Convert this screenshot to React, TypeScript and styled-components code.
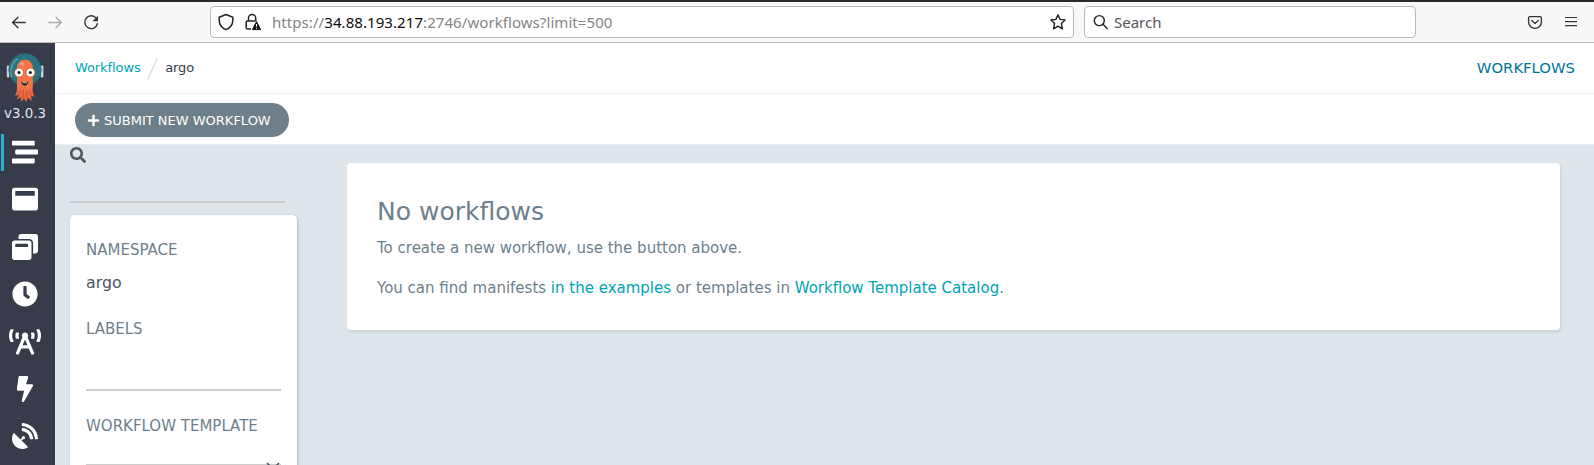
import React from "react";
import styled, { createGlobalStyle } from "styled-components";
import {
  FaStream,
  FaWindowMaximize,
  FaWindowRestore,
  FaClock,
  FaBroadcastTower,
  FaBolt,
  FaSatelliteDish,
  FaSearch,
  FaPlus,
} from "react-icons/fa";

const GlobalStyle = createGlobalStyle`
  * { box-sizing: border-box; }
  html, body { margin: 0; height: 100%; overflow: hidden; }
  body { font-family: "DejaVu Sans", sans-serif; font-size: 15px; background: #dee6eb; }
`;

const Window = styled.div`
  display: flex;
  flex-direction: column;
  height: 465px;
  overflow: hidden;
`;

const BrowserBar = styled.div`
  display: flex;
  flex: none;
  align-items: center;
  height: 43px;
  border-top: 2px solid #2b2828;
  border-bottom: 1px solid #bcbcbc;
  background: #f8f8f8;
  font-family: "Noto Sans", sans-serif;
  font-size: 15px;
`;

const NavButtons = styled.div`
  display: flex;
  gap: 16px;
  width: 210px;
  padding-left: 9px;
  svg { display: block; }
`;

const Field = styled.div<{ $width: number }>`
  display: flex;
  align-items: center;
  width: ${(p) => p.$width}px;
  height: 32px;
  border: 1px solid #bbbbbb;
  border-radius: 4px;
  background: #fff;
  svg { display: block; flex: none; }
`;

const AddressField = styled(Field)`
  padding: 0 5px 0 6px;
  margin-right: 10px;
`;

const SearchField = styled(Field)`
  padding-left: 7px;
  gap: 4px;
  font-size: 15px;
  color: #55555a;
`;

const SiteInfo = styled.div`
  display: flex;
  gap: 9px;
`;

const Address = styled.div`
  flex: 1;
  margin-left: 10px;
  color: #858585;
  letter-spacing: 0.07px;
  white-space: nowrap;
`;

const Host = styled.span`
  color: #0c0c0d;
`;

const BrowserTools = styled.div`
  display: flex;
  margin-left: auto;
  padding-right: 13px;
  gap: 16px;
  svg { display: block; }
`;

const Body = styled.div`
  display: flex;
  flex: 1;
  min-height: 0;
`;

const Sidebar = styled.nav`
  display: flex;
  flex-direction: column;
  flex: none;
  width: 55px;
  padding-top: 9px;
  background: #373b4a;
  color: #fff;
`;

const Brand = styled.div`
  padding-left: 6px;
  height: 50px;
  flex: none;
  svg { display: block; }
`;

const Version = styled.div`
  width: 55px;
  height: 18px;
  flex: none;
  margin: 3px 0 11px;
  padding-left: 4px;
  color: #dfe4ea;
  font-size: 13.4px;
  line-height: 18px;
`;

const NavItem = styled.div<{ $active?: boolean; $size?: number }>`
  display: flex;
  flex: none;
  align-items: center;
  justify-content: center;
  height: 37px;
  margin: 0 5px 10.4px 1px;
  border-left: 3px solid ${(p) => (p.$active ? "#1fb5cc" : "transparent")};
  padding: 0 5px ${(p) => (p.$active ? 2 : 1)}px 0;
  font-size: ${(p) => p.$size ?? 26}px;
  svg { display: block; flex: none; }
`;

const Content = styled.main`
  display: flex;
  flex-direction: column;
  flex: 1;
  min-width: 0;
`;

const PageHeader = styled.header`
  display: flex;
  flex: none;
  align-items: center;
  justify-content: space-between;
  height: 51px;
  padding: 0 19px 0 20px;
  border-bottom: 1px solid #eff1f3;
  background: #fff;
`;

const Breadcrumbs = styled.div`
  display: flex;
  align-items: center;
  padding-bottom: 1px;
  color: #363c4a;
  font-size: 13px;
  letter-spacing: -0.09px;
  svg { display: block; margin: 2px 7px 0 6.5px; }
`;

const Link = styled.span`
  color: #00a4b6;
`;

const PageTitle = styled.div`
  padding-bottom: 2px;
  color: #007592;
  font-size: 14.8px;
`;

const Toolbar = styled.div`
  display: flex;
  flex: none;
  align-items: center;
  height: 51px;
  padding: 2px 0 0 20px;
  border-bottom: 1px solid #e9eef1;
  background: #fff;
`;

const SubmitButton = styled.button`
  display: flex;
  align-items: center;
  gap: 4px;
  width: 214px;
  height: 34px;
  padding: 0 0 0 12px;
  border: 0;
  border-radius: 17px;
  background: #6d7f8b;
  color: #fff;
  font-family: inherit;
  font-size: 13px;
  white-space: nowrap;
`;

const Columns = styled.div`
  display: flex;
  flex: 1;
  min-height: 0;
  background: #dee6eb;
`;

const Filters = styled.aside`
  display: flex;
  flex-direction: column;
  width: 227px;
  margin-left: 15px;
  color: #6d7f8b;
`;

const SearchInput = styled.div`
  width: 215px;
  height: 58px;
  flex: none;
  padding-top: 2px;
  margin-bottom: 12px;
  border-bottom: 2px solid #cccccc;
  color: #495763;
  font-size: 16px;
  svg { display: block; }
`;

const FilterCard = styled.div`
  flex: none;
  height: 300px;
  padding: 25px 16px;
  border-radius: 5px;
  background: #fff;
  box-shadow: 1px 1px 3px #a9bbc4;
`;

const Label = styled.div`
  height: 20px;
  line-height: 20px;
  white-space: nowrap;
`;

const Value = styled.div`
  height: 20px;
  margin: 13px 0 26px;
  color: #495763;
  font-size: 15.8px;
  line-height: 20px;
`;

const InputLine = styled.div<{ $height: number }>`
  display: flex;
  justify-content: flex-end;
  align-items: flex-end;
  height: ${(p) => p.$height}px;
  margin-bottom: 25px;
  border-bottom: 2px solid #cccccc;
  svg { display: block; flex: none; margin: 0 1px -7px 0; }
`;

const EmptyState = styled.section`
  width: 1213px;
  height: 167px;
  margin: 18px 0 0 50px;
  padding: 31px 30px;
  border-radius: 4px;
  background: #fff;
  box-shadow: 1px 2px 3px #c5d0d5;
  color: #6d7f8b;
`;

const Heading = styled.h4`
  margin: 0 0 6px;
  font-size: 25px;
  font-weight: 400;
  line-height: 36px;
`;

const Paragraph = styled.p`
  margin: 0 0 16px;
  line-height: 24px;
`;

const ArrowIcon = ({ color, flip }: { color: string; flip?: boolean }) => (
  <svg width="20" height="20" viewBox="0 0 20 20" fill="none" stroke={color} strokeWidth="1.4" strokeLinecap="round" strokeLinejoin="round">
    <path d={flip ? "M3.8 10.5H16.3M11 5.3l5.4 5.2-5.4 5.2" : "M16.2 10.5H3.7M9 5.3L3.6 10.5 9 15.7"} />
  </svg>
);

const ReloadIcon = () => (
  <svg width="20" height="20" viewBox="0 0 20 20" fill="none">
    <path d="M15.3 6.3A6.4 6.4 0 1 0 16.4 11.8" stroke="#343438" strokeWidth="1.4" strokeLinecap="round" />
    <path d="M17 3.8V9.3H11.4z" fill="#343438" />
  </svg>
);

const ShieldIcon = () => (
  <svg width="18" height="20" viewBox="0 0 18 20" fill="none" stroke="#222226" strokeWidth="1.5" strokeLinejoin="round">
    <path d="M9 2.5L15.8 5.2V8.1C15.8 12.6 13 16.2 9 17.6 5 16.2 2.2 12.6 2.2 8.1V5.2z" />
  </svg>
);

const LockWarningIcon = () => (
  <svg width="18" height="20" viewBox="0 0 18 20" fill="none">
    <path d="M4.5 9V6a3.6 3.6 0 0 1 7.2 0v3M7 17.1H3.6a1.4 1.4 0 0 1-1.4-1.4V10.4A1.4 1.4 0 0 1 3.6 9H11.6" stroke="#222226" strokeWidth="1.5" />
    <path d="M12.5 9.6L16.6 17.6H8.4z" fill="#16161a" stroke="#16161a" strokeLinejoin="round" />
    <path d="M12.5 12v2.7M12.5 15.8v1.1" stroke="#fff" strokeWidth="1" />
  </svg>
);

const StarIcon = () => (
  <svg width="20" height="20" viewBox="0 0 20 20" fill="none" stroke="#222226" strokeWidth="1.4" strokeLinejoin="round">
    <path d="M10 2.8l2.1 4.6 5 .6-3.7 3.4 1 5.4-4.4-2.6-4.4 2.6 1-5.4L2.9 8l5-.6z" />
  </svg>
);

const MagnifierIcon = () => (
  <svg width="18" height="20" viewBox="0 0 18 20" fill="none" stroke="#222226" strokeWidth="1.4" strokeLinecap="round">
    <circle cx="7.3" cy="8.6" r="5" />
    <path d="M11 12.3l4.2 4.3" />
  </svg>
);

const PocketIcon = () => (
  <svg width="20" height="20" viewBox="0 0 20 20" fill="none" stroke="#343438" strokeWidth="1.4" strokeLinecap="round" strokeLinejoin="round">
    <path d="M5 4.6h10a1.4 1.4 0 0 1 1.4 1.4v4a6.4 6.4 0 0 1-12.8 0V6A1.4 1.4 0 0 1 5 4.6z" />
    <path d="M6.8 8.5l3.2 2.9 3.2-2.9" />
  </svg>
);

const MenuIcon = () => (
  <svg width="20" height="20" viewBox="0 0 20 20" stroke="#343438" strokeWidth="1.2">
    <path d="M4 5.5h12M4 9.6h12M4 13.7h12" />
  </svg>
);

const Logo = () => (
  <svg width="38" height="50" viewBox="0 0 38 50">
    <rect x=".8" y="13.5" width="2.6" height="12" rx="1" fill="#bdd5e3" />
    <rect x="34.8" y="13.5" width="2.6" height="12" rx="1" fill="#bdd5e3" />
    <circle cx="19" cy="17.8" r="16.2" fill="#2a7480" stroke="#33626f" strokeWidth=".8" />
    <path d="M5.6 25C3.8 18 6 10 11.5 7" fill="none" stroke="#71a5ab" strokeWidth="1.1" />
    <path d="M11 31C11.4 38 10.5 41 9 44.2L12.6 42.6L11 47.6L15 45.2L14.8 50L18 46.5L20.2 50L21.8 45.4L25.8 49L25 43.6L28.6 45C27 41 26.2 38 26.6 31z" fill="#ea673f" />
    <path d="M11 32V15.5a7.9 7.9 0 0 1 15.8 0V32q-.2 6-1.8 7H13q-1.8-1-2-7z" fill="#f47449" />
    <path d="M14.2 37q-.2 5-1.6 7.5M17.3 37.5v8.5M20.6 37.5v8.5M23.6 37q.1 5 1.5 7" fill="none" stroke="#c94f30" strokeWidth=".7" />
    <ellipse cx="16" cy="11.8" rx="2.7" ry="1.9" fill="#fa9875" />
    <circle cx="13" cy="20.6" r="4.5" fill="#fff" stroke="#df5939" strokeWidth=".8" />
    <circle cx="24.4" cy="20.6" r="4.5" fill="#fff" stroke="#df5939" strokeWidth=".8" />
    <circle cx="13" cy="20.6" r="1.5" fill="#111318" />
    <circle cx="24.4" cy="20.6" r="1.5" fill="#111318" />
    <path d="M15.2 29.6q3.5 1.7 7 0q-.7 4-3.5 4t-3.5-4z" fill="#171719" />
    <path d="M16.5 30.2q2.2.8 4.4 0v1.1h-4.4z" fill="#fff" />
  </svg>
);

const navItems = [
  { Icon: FaStream, active: true },
  { Icon: FaWindowMaximize },
  { Icon: FaWindowRestore },
  { Icon: FaClock },
  { Icon: FaBroadcastTower, size: 32 },
  { Icon: FaBolt },
  { Icon: FaSatelliteDish },
];

export default function App() {
  return (
    <Window>
      <GlobalStyle />
      <BrowserBar>
        <NavButtons>
          <ArrowIcon color="#343438" />
          <ArrowIcon color="#adadad" flip />
          <ReloadIcon />
        </NavButtons>
        <AddressField $width={864}>
          <SiteInfo>
            <ShieldIcon />
            <LockWarningIcon />
          </SiteInfo>
          <Address>
            https://<Host>34.88.193.217</Host>:2746/workflows?limit=500
          </Address>
          <StarIcon />
        </AddressField>
        <SearchField $width={332}>
          <MagnifierIcon />
          Search
        </SearchField>
        <BrowserTools>
          <PocketIcon />
          <MenuIcon />
        </BrowserTools>
      </BrowserBar>
      <Body>
        <Sidebar>
          <Brand>
            <Logo />
          </Brand>
          <Version>v3.0.3</Version>
          {navItems.map(({ Icon, active, size }, i) => (
            <NavItem key={i} $active={active} $size={size}>
              <Icon />
            </NavItem>
          ))}
        </Sidebar>
        <Content>
          <PageHeader>
            <Breadcrumbs>
              <Link>Workflows</Link>
              <svg width="11" height="22" viewBox="0 0 11 22">
                <path d="M10.3.3L.7 21.7" stroke="#d5dce1" strokeWidth="1.3" />
              </svg>
              argo
            </Breadcrumbs>
            <PageTitle>WORKFLOWS</PageTitle>
          </PageHeader>
          <Toolbar>
            <SubmitButton>
              <FaPlus size={13} />
              SUBMIT NEW WORKFLOW
            </SubmitButton>
          </Toolbar>
          <Columns>
            <Filters>
              <SearchInput>
                <FaSearch />
              </SearchInput>
              <FilterCard>
                <Label>NAMESPACE</Label>
                <Value>argo</Value>
                <Label>LABELS</Label>
                <InputLine $height={52} />
                <Label>WORKFLOW TEMPLATE</Label>
                <InputLine $height={30}>
                  <svg width="14" height="9" viewBox="0 0 14 9" fill="none" stroke="#495763" strokeWidth="1.6">
                    <path d="M1 1l6 6 6-6" />
                  </svg>
                </InputLine>
              </FilterCard>
            </Filters>
            <EmptyState>
              <Heading>No workflows</Heading>
              <Paragraph>To create a new workflow, use the button above.</Paragraph>
              <Paragraph>
                You can find manifests <Link>in the examples</Link> or templates in <Link>Workflow Template Catalog</Link>.
              </Paragraph>
            </EmptyState>
          </Columns>
        </Content>
      </Body>
    </Window>
  );
}
